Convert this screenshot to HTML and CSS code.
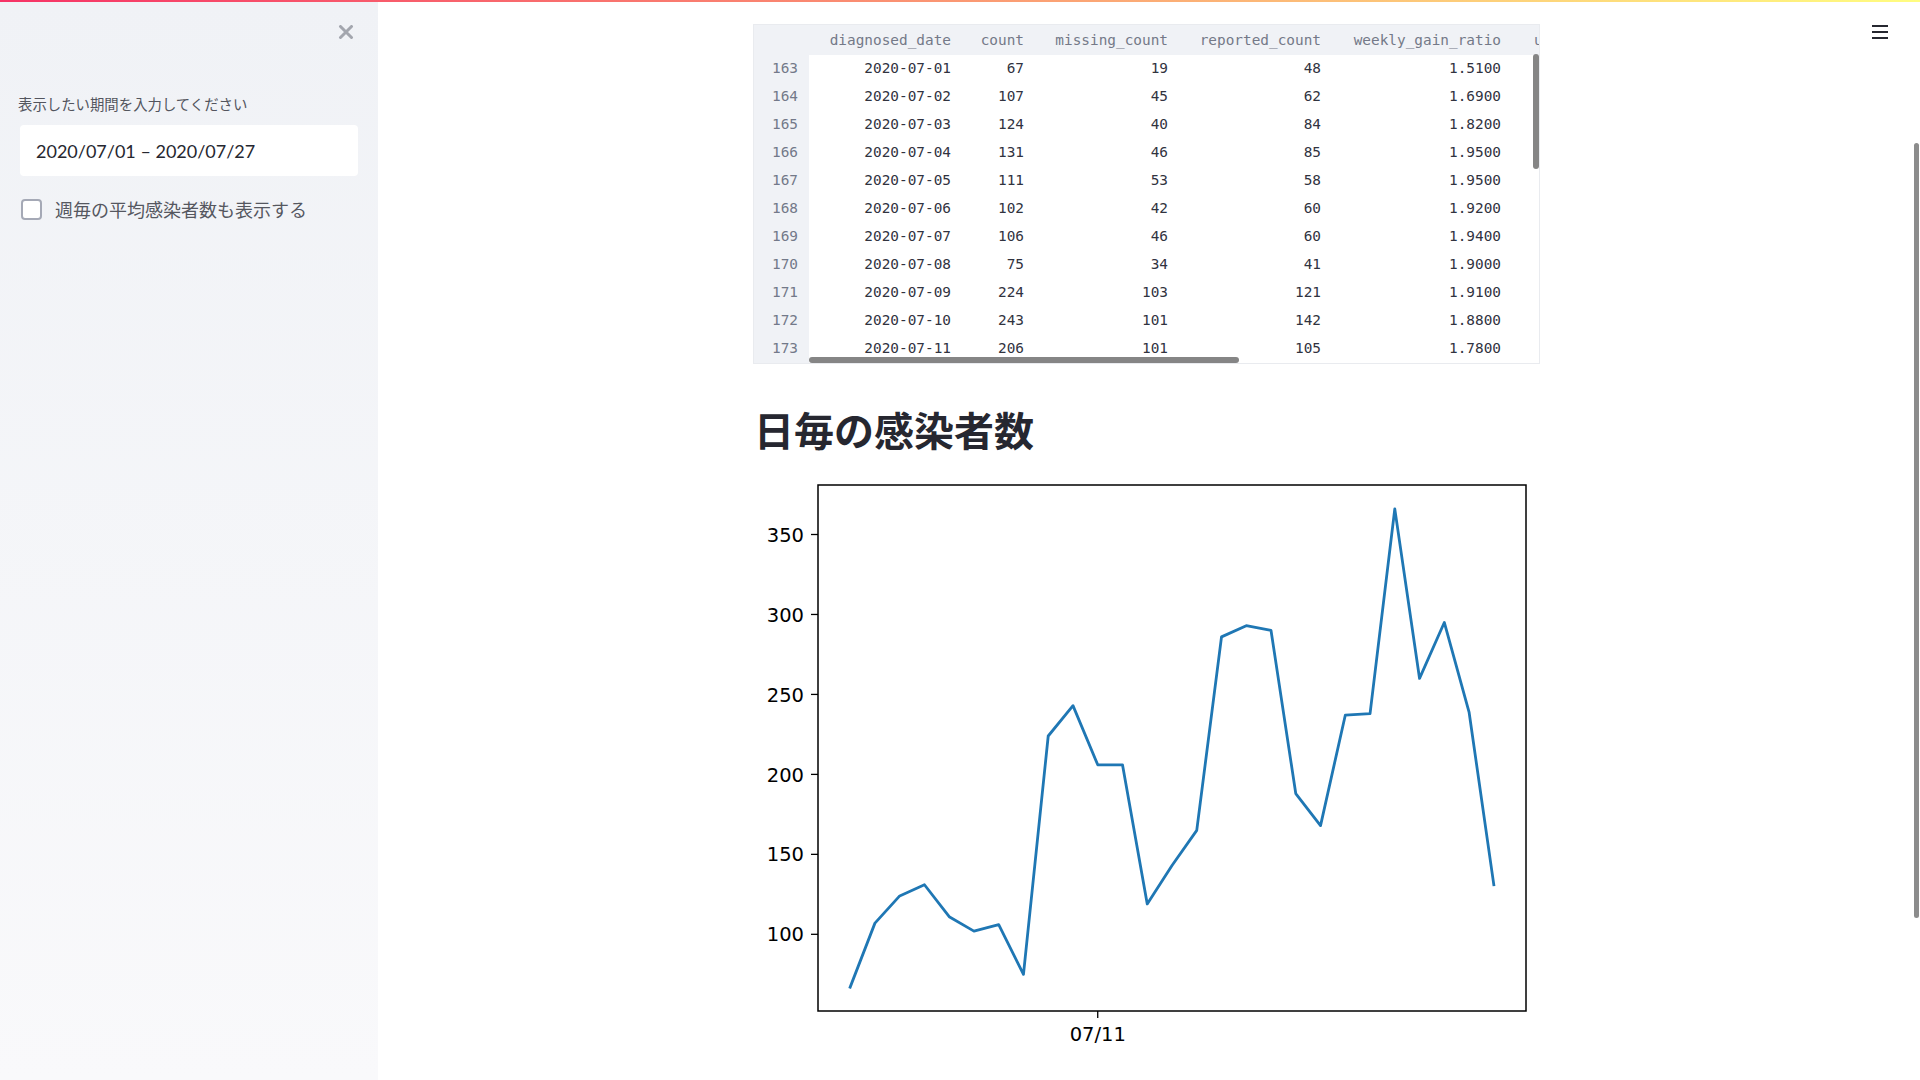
FILE: index.html
```html
<!DOCTYPE html>
<html lang="ja">
<head>
<meta charset="utf-8">
<title>日毎の感染者数</title>
<link rel="stylesheet" href="styles.css">
</head>
<body>
<div class="deco"></div>
<aside class="sidebar">
  <div class="sb-head">
    <svg class="close" width="16" height="14" viewBox="0 0 16 14"><path d="M2.5 1.5 L13.5 12.5 M13.5 1.5 L2.5 12.5" stroke="#a3a6ae" stroke-width="3" stroke-linecap="round"/></svg>
  </div>
  <div class="field-label">表示したい期間を入力してください</div>
  <div class="date-input">2020/07/01 – 2020/07/27</div>
  <label class="check-row"><span class="box"></span><span class="check-text">週毎の平均感染者数も表示する</span></label>
</aside>
<main class="main">
  <div class="menu"><span></span><span></span><span></span></div>
  <div class="content">
    <div class="df">
      <table class="grid">
        <colgroup>
          <col class="c-idx"><col class="c-date"><col class="c-count"><col class="c-miss"><col class="c-rep"><col class="c-ratio"><col class="c-next">
        </colgroup>
        <thead>
          <tr><th class="idx"></th><th>diagnosed_date</th><th>count</th><th>missing_count</th><th>reported_count</th><th>weekly_gain_ratio</th><th class="next">untracked_count</th></tr>
        </thead>
        <tbody>
          <tr><td class="idx">163</td><td>2020-07-01</td><td>67</td><td>19</td><td>48</td><td>1.5100</td><td></td></tr>
          <tr><td class="idx">164</td><td>2020-07-02</td><td>107</td><td>45</td><td>62</td><td>1.6900</td><td></td></tr>
          <tr><td class="idx">165</td><td>2020-07-03</td><td>124</td><td>40</td><td>84</td><td>1.8200</td><td></td></tr>
          <tr><td class="idx">166</td><td>2020-07-04</td><td>131</td><td>46</td><td>85</td><td>1.9500</td><td></td></tr>
          <tr><td class="idx">167</td><td>2020-07-05</td><td>111</td><td>53</td><td>58</td><td>1.9500</td><td></td></tr>
          <tr><td class="idx">168</td><td>2020-07-06</td><td>102</td><td>42</td><td>60</td><td>1.9200</td><td></td></tr>
          <tr><td class="idx">169</td><td>2020-07-07</td><td>106</td><td>46</td><td>60</td><td>1.9400</td><td></td></tr>
          <tr><td class="idx">170</td><td>2020-07-08</td><td>75</td><td>34</td><td>41</td><td>1.9000</td><td></td></tr>
          <tr><td class="idx">171</td><td>2020-07-09</td><td>224</td><td>103</td><td>121</td><td>1.9100</td><td></td></tr>
          <tr><td class="idx">172</td><td>2020-07-10</td><td>243</td><td>101</td><td>142</td><td>1.8800</td><td></td></tr>
          <tr><td class="idx">173</td><td>2020-07-11</td><td>206</td><td>101</td><td>105</td><td>1.7800</td><td></td></tr>
        </tbody>
      </table>
      <div class="vscroll"></div>
      <div class="hscroll"></div>
    </div>
    <h2 class="title">日毎の感染者数</h2>
    <svg class="chart" width="787" height="600" viewBox="0 0 787 600">
      <g class="ticks" stroke="#000" stroke-width="1.3">
        <line x1="58" y1="474.31" x2="65" y2="474.31"/>
        <line x1="58" y1="394.35" x2="65" y2="394.35"/>
        <line x1="58" y1="314.39" x2="65" y2="314.39"/>
        <line x1="58" y1="234.42" x2="65" y2="234.42"/>
        <line x1="58" y1="154.46" x2="65" y2="154.46"/>
        <line x1="58" y1="74.50" x2="65" y2="74.50"/>
        <line x1="344.73" y1="551" x2="344.73" y2="558"/>
      </g>
      <g class="ylab" font-family="DejaVu Sans, sans-serif" font-size="19.5" fill="#000" text-anchor="end">
        <text x="51" y="481.4">100</text>
        <text x="51" y="401.4">150</text>
        <text x="51" y="321.5">200</text>
        <text x="51" y="241.5">250</text>
        <text x="51" y="161.5">300</text>
        <text x="51" y="81.6">350</text>
      </g>
      <text x="344.73" y="580.5" font-family="DejaVu Sans, sans-serif" font-size="19.5" fill="#000" text-anchor="middle">07/11</text>
      <polyline fill="none" stroke="#1f77b4" stroke-width="2.8" stroke-linejoin="round" stroke-linecap="square"
        points="97.18,527.09 121.94,463.12 146.69,435.93 171.45,424.74 196.20,456.72 220.96,471.12 245.71,464.72 270.47,514.30 295.22,276.00 319.98,245.62 344.73,304.79 369.49,304.79 394.24,443.93 419.00,405.55 443.75,370.36 468.51,176.85 493.26,165.66 518.02,170.45 542.77,333.58 567.53,365.57 592.28,255.22 617.04,253.62 641.79,48.91 666.55,218.43 691.30,162.46 716.06,252.02 740.81,424.74"/>
      <rect x="65" y="25" width="708" height="526" fill="none" stroke="#000" stroke-width="1.5"/>
    </svg>
  </div>
  <div class="page-thumb"></div>
</main>
</body>
</html>
```

FILE: styles.css
```css
html, body {
  margin: 0;
  padding: 0;
  height: 100%;
}
body {
  display: flex;
  overflow: hidden;
  background: #ffffff;
  color: #262730;
  font-family: "Noto Sans", "Noto Sans CJK JP", sans-serif;
  position: relative;
}
.deco {
  position: absolute;
  top: 0;
  left: 0;
  right: 0;
  height: 2px;
  background: linear-gradient(90deg, #f63366, #fffd80);
  z-index: 5;
}
.sidebar {
  width: 378px;
  flex: 0 0 378px;
  box-sizing: border-box;
  padding: 25px 20px 0 20px;
  background: linear-gradient(180deg, #f0f2f6 0%, #f9f9fb 100%);
  display: flex;
  flex-direction: column;
}
.sb-head {
  display: flex;
  justify-content: flex-end;
  height: 14px;
  padding-right: 4px;
}
.close { display: block; }
.field-label {
  margin-top: 55px;
  font-family: "Noto Sans CJK JP", sans-serif;
  font-size: 14.4px;
  line-height: 20px;
  color: #53555e;
  margin-left: -2px;
}
.date-input {
  margin-top: 11px;
  height: 51px;
  background: #ffffff;
  border-radius: 4px;
  display: flex;
  align-items: center;
  padding-left: 16px;
  font-family: "Lato", sans-serif;
  font-size: 18px;
  color: #262730;
}
.check-row {
  margin-top: 22px;
  display: flex;
  align-items: center;
  height: 22px;
}
.box {
  width: 17px;
  height: 17px;
  border: 2px solid #a5a9b6;
  border-radius: 4px;
  background: #ffffff;
  margin-left: 1px;
}
.check-text {
  margin-left: 13px;
  font-family: "Noto Sans CJK JP", sans-serif;
  font-size: 18px;
  line-height: 22px;
  color: #55575f;
}
.main {
  flex: 1;
  position: relative;
  height: 100%;
}
.menu {
  position: absolute;
  top: 25px;
  right: 32px;
  width: 16px;
  display: flex;
  flex-direction: column;
  gap: 4px;
}
.menu span {
  display: block;
  height: 2px;
  background: #262730;
}
.page-thumb {
  position: absolute;
  right: 1px;
  top: 143px;
  width: 5px;
  height: 775px;
  background: #8c8c8c;
  border-radius: 3px;
}
.content {
  margin-left: 375px;
  padding-top: 24px;
  width: 787px;
}
.df {
  position: relative;
  width: 787px;
  height: 340px;
  box-sizing: border-box;
  border: 1px solid #e9ebef;
  overflow: hidden;
}
.grid {
  border-collapse: collapse;
  table-layout: fixed;
  width: 925px;
  font-family: "DejaVu Sans Mono", "Liberation Mono", monospace;
  font-size: 14.4px;
}
.c-idx { width: 55px; }
.c-date { width: 158px; }
.c-count { width: 73px; }
.c-miss { width: 144px; }
.c-rep { width: 153px; }
.c-ratio { width: 180px; }
.c-next { width: 162px; }
.grid th, .grid td {
  padding: 0 16px 0 0;
  text-align: right;
  white-space: nowrap;
}
.grid th {
  height: 30px;
  background: #f0f2f6;
  color: #747988;
  font-weight: 400;
}
.grid td {
  height: 26px;
  padding-bottom: 2px;
  color: #31333f;
}
.grid .idx {
  background: #f0f2f6;
  color: #737989;
  padding-right: 11px;
}
.grid th.next {
  text-align: left;
  padding-left: 17px;
}
.vscroll {
  position: absolute;
  right: 0;
  top: 29px;
  width: 6px;
  height: 115px;
  border-radius: 3px;
  background: #858585;
}
.hscroll {
  position: absolute;
  left: 55px;
  top: 332px;
  width: 430px;
  height: 6px;
  border-radius: 3px;
  background: #858585;
}
.title {
  margin: 37px 0 0 1px;
  font-family: "Noto Sans CJK JP", sans-serif;
  font-size: 40px;
  line-height: 56px;
  font-weight: 600;
  color: #262730;
}
.chart {
  display: block;
  margin-top: 3px;
}
```
